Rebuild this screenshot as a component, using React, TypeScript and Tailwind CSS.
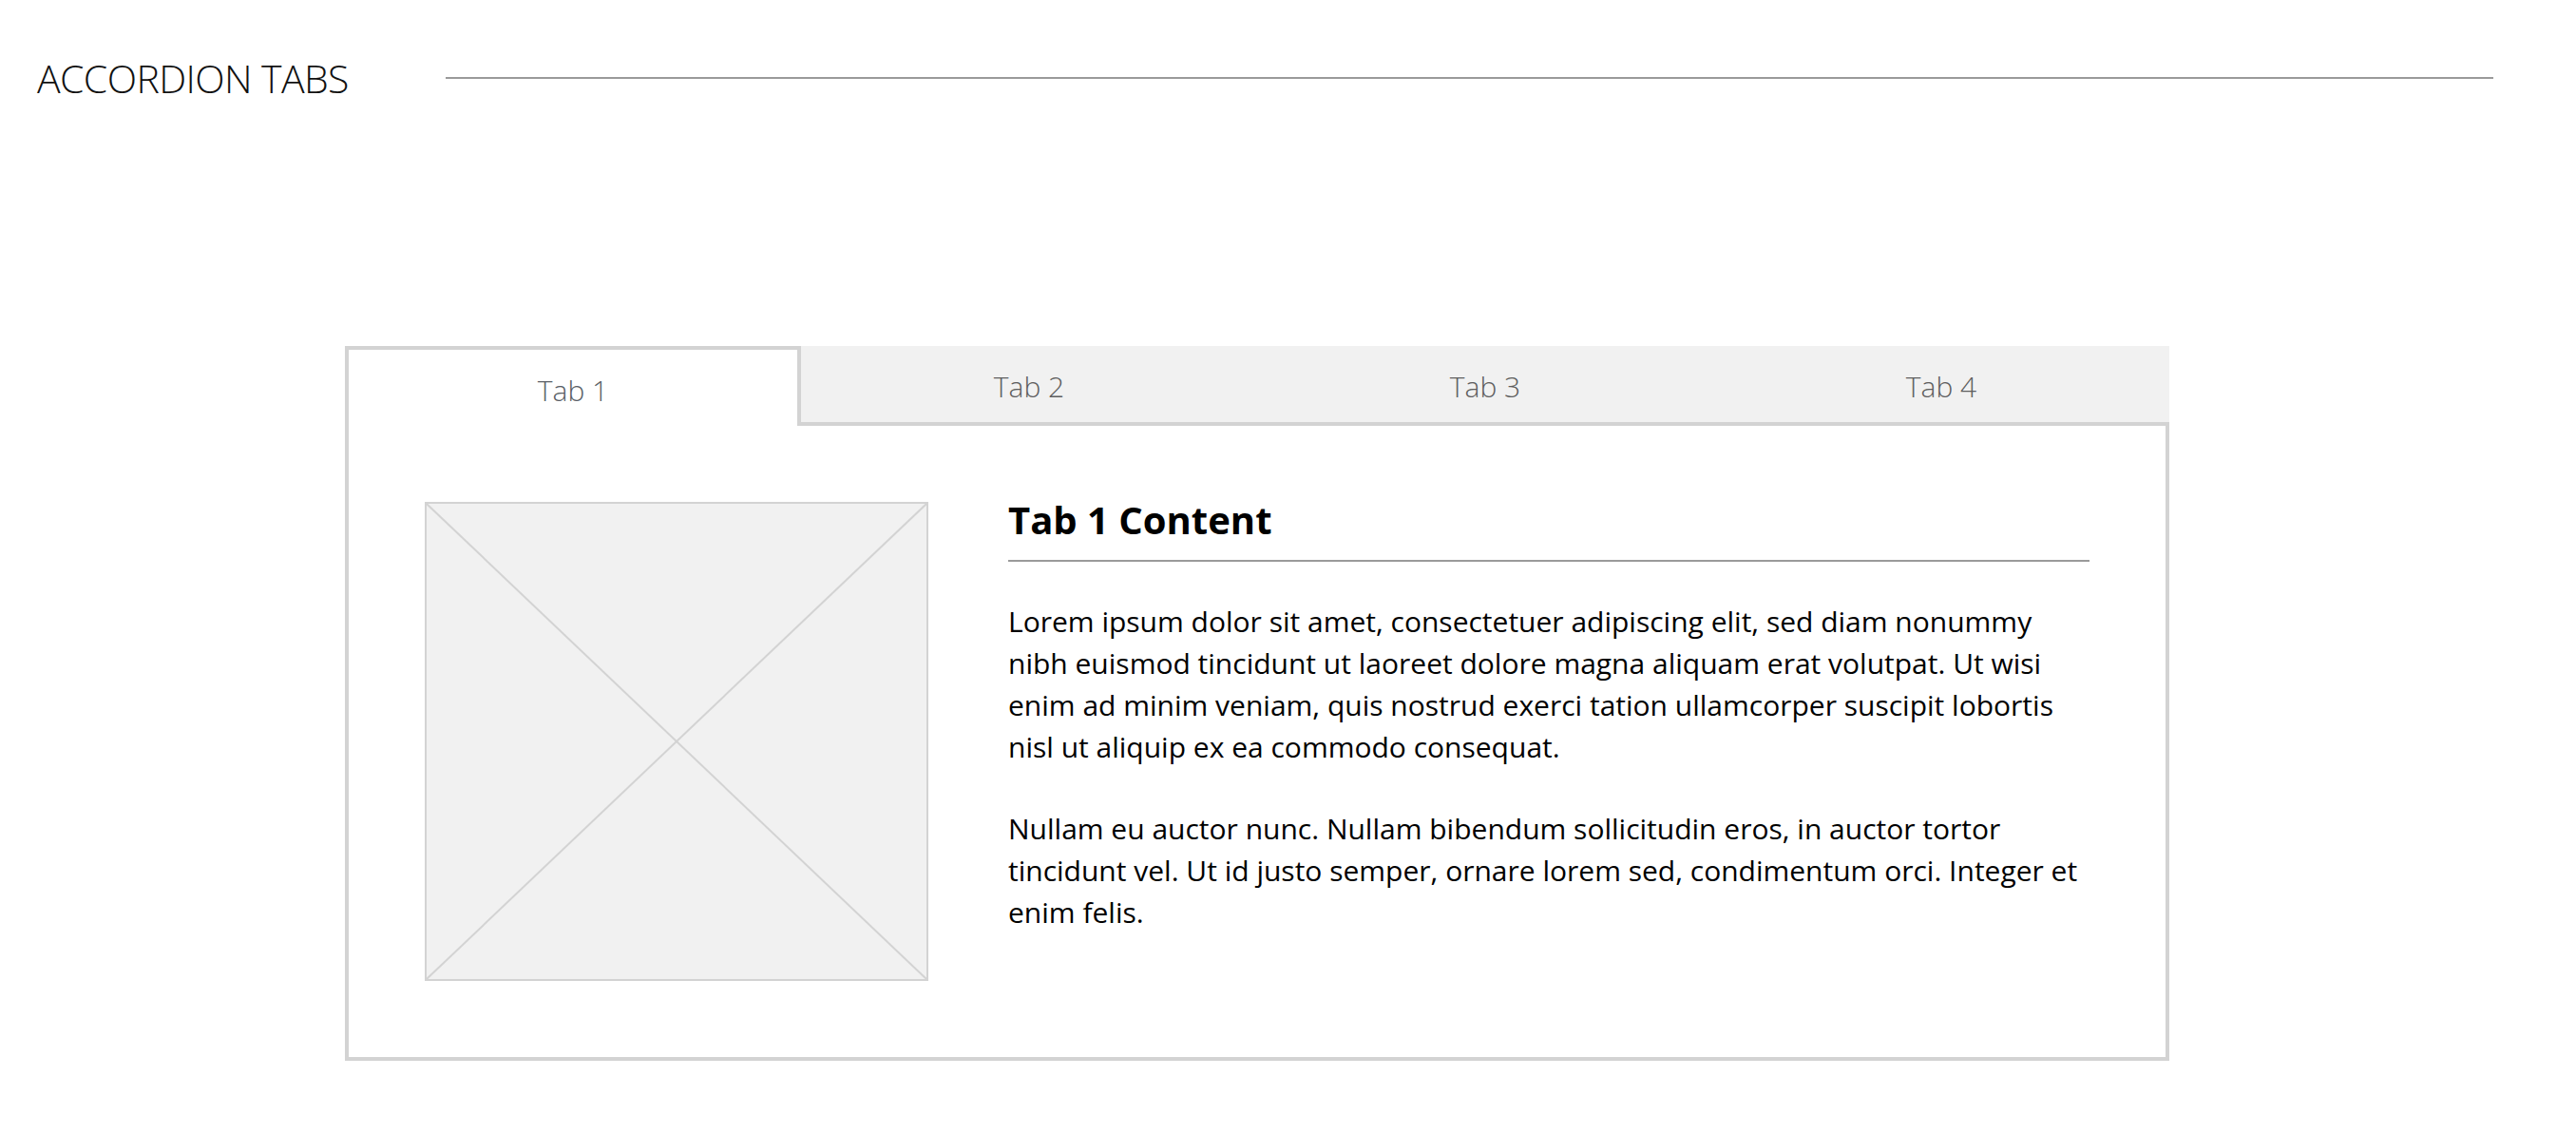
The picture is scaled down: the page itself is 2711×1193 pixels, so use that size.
import { useState } from "react"

const tabs = ["Tab 1", "Tab 2", "Tab 3", "Tab 4"]

function ImagePlaceholder() {
  return (
    <div className="relative w-[530px] h-[504px] shrink-0 border-2 border-[#d3d3d3] bg-[#f1f1f1]">
      <svg className="absolute inset-0 w-full h-full" viewBox="0 0 100 100" preserveAspectRatio="none">
        <line x1="0" y1="0" x2="100" y2="100" stroke="#d3d3d3" strokeWidth="2" vectorEffect="non-scaling-stroke" />
        <line x1="100" y1="0" x2="0" y2="100" stroke="#d3d3d3" strokeWidth="2" vectorEffect="non-scaling-stroke" />
      </svg>
    </div>
  )
}

export default function App() {
  const [active, setActive] = useState(0)

  return (
    <div className="min-h-screen bg-white font-['Open_Sans',sans-serif] text-black">
      {/* Section header */}
      <div className="flex items-center pt-[61px] pl-[39px] pr-[87px]">
        <h1 className="w-[430px] shrink-0 text-[41px] leading-[42px] font-light text-[#111] tracking-[-0.6px]">
          ACCORDION TABS
        </h1>
        <div className="flex-1 h-[2px] bg-[#9a9a9a]" />
      </div>

      {/* Tabs */}
      <div className="ml-[363px] mt-[261px] w-[1920px] flex flex-col">
        <div className="flex">
          {tabs.map((tab, i) =>
            i === active ? (
              <button
                key={tab}
                onClick={() => setActive(i)}
                className="w-[480px] h-[84px] pt-[5px] flex items-center justify-center bg-white border-l-4 border-t-4 border-r-4 border-[#d3d3d3] text-[30px] leading-[30px] font-light text-[#5a5f66]"
              >
                {tab}
              </button>
            ) : (
              <button
                key={tab}
                onClick={() => setActive(i)}
                className="w-[480px] h-[84px] pt-[5px] flex items-center justify-center bg-[#f1f1f1] border-b-4 border-[#d3d3d3] text-[30px] leading-[30px] font-light text-[#5e5e5e]"
              >
                {tab}
              </button>
            )
          )}
        </div>

        <div className="flex items-start gap-[84px] p-[80px] border-l-4 border-r-4 border-b-4 border-[#d3d3d3]">
          <ImagePlaceholder />
          <div className="flex-1">
            <h2 className="text-[40px] leading-[37px] font-bold pb-[24px] border-b-2 border-[#9a9a9a]">
              Tab {active + 1} Content
            </h2>
            <p className="mt-[41px] text-[30px] leading-[44px]">
              Lorem ipsum dolor sit amet, consectetuer adipiscing elit, sed diam nonummy nibh euismod tincidunt ut laoreet dolore magna aliquam erat volutpat. Ut wisi enim ad minim veniam, quis nostrud exerci tation ullamcorper suscipit lobortis nisl ut aliquip ex ea commodo consequat.
            </p>
            <p className="mt-[42px] text-[30px] leading-[44px]">
              Nullam eu auctor nunc. Nullam bibendum sollicitudin eros, in auctor tortor tincidunt vel. Ut id justo semper, ornare lorem sed, condimentum orci. Integer et enim felis.
            </p>
          </div>
        </div>
      </div>
    </div>
  )
}
